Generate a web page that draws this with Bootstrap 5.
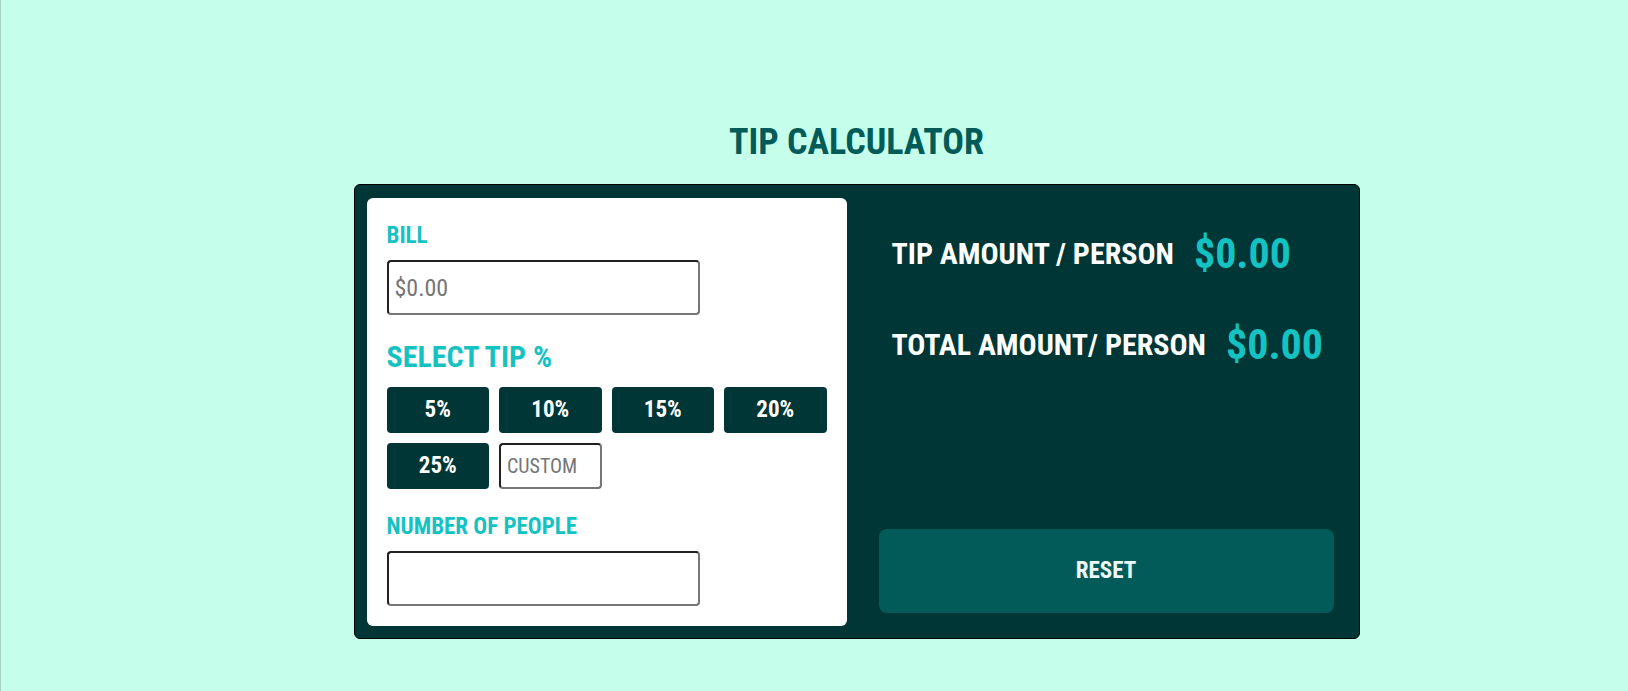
<!DOCTYPE html>
<html lang="en">
<head>
<meta charset="utf-8">
<meta name="viewport" content="width=device-width, initial-scale=1">
<title>Tip Calculator</title>
<link href="https://cdn.jsdelivr.net/npm/bootstrap@5.3.0/dist/css/bootstrap.min.css" rel="stylesheet">
<style>
  body {
    background: #c5ffeb;
    font-family: "Roboto Condensed", Roboto, sans-serif;
    font-weight: 700;
    min-height: 100vh;
    border-left: 1px solid #a3d4c4;
  }
  main { padding: 120px 16px 48px; }
  .calculator { max-width: 1006px; }
  .page-title { color: #025b58; font-size: 36px; line-height: 44px; font-weight: 700; margin-bottom: 20px; }
  .panel { background: #013637; border: 1px solid #000; border-radius: 6px; padding: 13px 12px 12px; }
  .entry { background: #fff; border-radius: 6px; padding: 22px 20px 20px; }
  .field-label { color: #14c2c2; font-size: 23px; line-height: 32px; margin: 0 0 8px; }
  .tip-label { color: #14c2c2; font-size: 30px; line-height: 36px; float: none; margin: 0 0 12px; }
  .field {
    border: 2px inset #767676; border-radius: 4px; background: #fff;
    color: #222; font-size: 24px; font-weight: 400; padding: 0 6px; min-width: 0;
  }
  .field::placeholder { color: #757575; opacity: 1; }
  .field-wide { width: 313px; max-width: 100%; height: 55px; }
  .field-custom { font-size: 20px; }
  .tips { display: grid; grid-template-columns: repeat(4, 1fr); grid-auto-rows: 46px; gap: 10px; margin-bottom: 22px; }
  .tip-btn { background: #013637; color: #fff; font-size: 23px; line-height: 28px; font-weight: 700; border: 0; border-radius: 4px; padding: 0; }
  .tip-btn:hover, .reset-btn:hover { background: #14c2c2; color: #013637; }
  .results { padding: 22px 13px 13px 32px; }
  .result { color: #fff; font-size: 30px; line-height: 67px; padding-left: 13px; column-gap: 20px; margin-bottom: 24px; }
  .amount { color: #14c2c2; font-size: 42px; }
  .reset-btn { background: #025b58; color: #eff8fc; font-size: 23px; font-weight: 700; border: 0; border-radius: 8px; height: 84px; }
  @media (min-width: 1200px) {
    main { padding-left: 100px; }
    .entry { flex: 0 0 480px; }
  }
</style>
</head>
<body>
<main>
  <div class="calculator mx-auto">
    <h1 class="page-title text-center">TIP CALCULATOR</h1>
    <div class="panel d-flex flex-column flex-xl-row">
      <form class="entry">
        <div class="mb-4">
          <label class="field-label d-block" for="bill">BILL</label>
          <input class="field field-wide d-block" id="bill" type="text" inputmode="decimal" placeholder="$0.00">
        </div>
        <fieldset>
          <legend class="tip-label">SELECT TIP %</legend>
          <div class="tips">
            <button class="btn tip-btn" type="button">5%</button>
            <button class="btn tip-btn" type="button">10%</button>
            <button class="btn tip-btn" type="button">15%</button>
            <button class="btn tip-btn" type="button">20%</button>
            <button class="btn tip-btn" type="button">25%</button>
            <input class="field field-custom" type="text" inputmode="numeric" aria-label="Custom tip" placeholder="CUSTOM">
          </div>
        </fieldset>
        <div>
          <label class="field-label d-block" for="people">NUMBER OF PEOPLE</label>
          <input class="field field-wide d-block" id="people" type="text" inputmode="numeric">
        </div>
      </form>
      <section class="results flex-fill d-flex flex-column">
        <div class="result d-flex flex-wrap align-items-center"><span>TIP AMOUNT / PERSON</span><span class="amount">$0.00</span></div>
        <div class="result d-flex flex-wrap align-items-center"><span>TOTAL AMOUNT/ PERSON</span><span class="amount">$0.00</span></div>
        <button class="btn reset-btn w-100 mt-auto" type="button">RESET</button>
      </section>
    </div>
  </div>
</main>
<script src="https://cdn.jsdelivr.net/npm/bootstrap@5.3.0/dist/js/bootstrap.bundle.min.js"></script>
</body>
</html>
